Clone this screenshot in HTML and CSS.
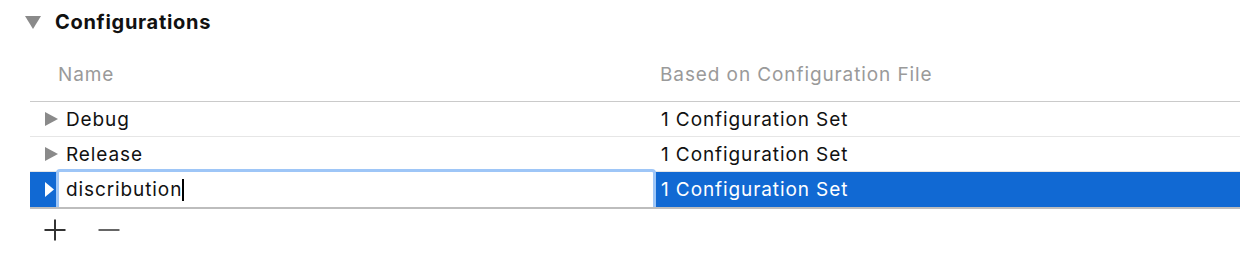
FILE: index.html
```html
<!DOCTYPE html>
<html>
<head>
<meta charset="utf-8">
<link rel="stylesheet" href="styles.css">
</head>
<body>
<div class="section">
  <div class="section-head">
    <svg class="disc-down" width="16" height="13" viewBox="0 0 16 13"><polygon points="0,0 16,0 8,13" fill="#8a8a8a"/></svg>
    <h2 class="title">Configurations</h2>
  </div>
  <div class="table">
    <div class="thead">
      <div class="cell c1">Name</div>
      <div class="cell c2">Based on Configuration File</div>
    </div>
    <div class="row">
      <div class="cell c1"><span class="tri-wrap"><svg width="13" height="14" viewBox="0 0 13 14"><polygon points="0,0 13,7 0,14" fill="#8a8a8a"/></svg></span><span class="name">Debug</span></div>
      <div class="cell c2">1 Configuration Set</div>
    </div>
    <div class="row">
      <div class="cell c1"><span class="tri-wrap"><svg width="13" height="14" viewBox="0 0 13 14"><polygon points="0,0 13,7 0,14" fill="#8a8a8a"/></svg></span><span class="name">Release</span></div>
      <div class="cell c2">1 Configuration Set</div>
    </div>
    <div class="row selected">
      <div class="cell c1"><span class="tri-wrap sel"><svg width="9" height="15" viewBox="0 0 9 15"><polygon points="0,0 9,7.5 0,15" fill="#ffffff"/></svg></span><span class="field"><span class="field-text">discribution</span><span class="caret"></span></span></div>
      <div class="cell c2">1 Configuration Set</div>
    </div>
  </div>
  <div class="buttons">
    <svg class="btn" width="22" height="22" viewBox="0 0 22 22"><path d="M11 0.5V21.5M0.5 11H21.5" stroke="#333" stroke-width="2" fill="none"/></svg>
    <svg class="btn" width="22" height="22" viewBox="0 0 22 22"><path d="M0.5 11H21.5" stroke="#666" stroke-width="2" fill="none"/></svg>
  </div>
</div>
</body>
</html>
```
FILE: styles.css
```css
html, body {
  margin: 0;
  padding: 0;
  background: #ffffff;
}
body {
  font-family: Inter, "Liberation Sans", sans-serif;
  color: #111;
  width: 1240px;
  height: 259px;
  overflow: hidden;
}
.section-head {
  display: flex;
  align-items: center;
  height: 44px;
  padding-left: 25px;
}
.disc-down {
  display: block;
  margin-top: 0;
}
.title {
  margin: 0 0 0 14px;
  font-size: 20px;
  font-weight: 700;
  letter-spacing: 0.7px;
  color: #111;
}
.table {
  margin-left: 30px;
}
.thead, .row {
  display: grid;
  grid-template-columns: 626px 1fr;
  font-size: 19px;
  letter-spacing: 0.9px;
}
.thead {
  height: 54px;
  padding-top: 3px;
  border-bottom: 1px solid #cacaca;
  align-items: center;
  color: #9a9a9a;
}
.thead .c1 { padding-left: 28px; }
.thead .c2 { padding-left: 4px; }
.row {
  height: 34px;
  border-bottom: 1px solid #e6e6e6;
  align-items: center;
}
.cell {
  white-space: nowrap;
}
.row .c1 {
  display: flex;
  align-items: center;
  height: 100%;
}
.row .c2 {
  padding-left: 5px;
}
.tri-wrap {
  display: flex;
  align-items: center;
  width: 36px;
  padding-left: 15px;
  box-sizing: border-box;
  height: 100%;
}
.row.selected {
  background: #1169d3;
  color: #ffffff;
  height: 35px;
  border-bottom: 2px solid #bdbdbd;
}
.tri-wrap.sel {
  width: 26px;
}
.field {
  flex: 1;
  align-self: stretch;
  margin-top: -3px;
  background: #ffffff;
  border: 3px solid #9ec6f7;
  border-bottom: none;
  border-radius: 4px 4px 0 0;
  color: #111;
  display: flex;
  align-items: center;
  padding-left: 7px;
}
.caret {
  display: inline-block;
  width: 2px;
  height: 22px;
  background: #000;
  margin-left: 0;
}
.buttons {
  display: flex;
  align-items: center;
  gap: 32px;
  padding-left: 44px;
  margin-top: 10px;
}
.btn { display: block; }
```
